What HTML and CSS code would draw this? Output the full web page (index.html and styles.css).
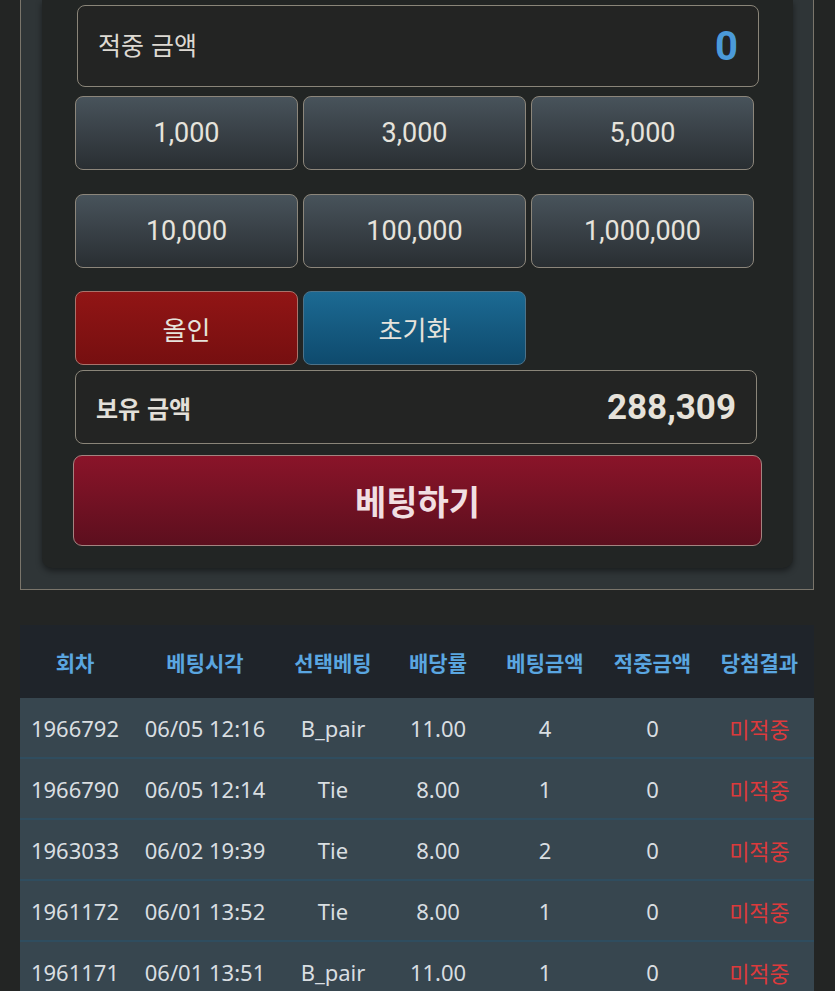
FILE: index.html
```html
<!DOCTYPE html>
<html lang="ko">
<head>
    <meta charset="UTF-8">
    <meta name="viewport" content="width=device-width, initial-scale=1.0">
    <title>베팅</title>
    <link rel="stylesheet" href="styles.css">
</head>
<body>
    <div class="bet-panel">
        <div class="bet-inner">
            <div class="win-box">
                <span class="win-label">적중 금액</span>
                <span class="win-value">0</span>
            </div>
            <div class="chip-grid">
                <button class="chip">1,000</button>
                <button class="chip">3,000</button>
                <button class="chip">5,000</button>
                <button class="chip">10,000</button>
                <button class="chip">100,000</button>
                <button class="chip">1,000,000</button>
            </div>
            <div class="action-row">
                <button class="action all-in">올인</button>
                <button class="action reset">초기화</button>
            </div>
            <div class="balance-box">
                <span class="balance-label">보유 금액</span>
                <span class="balance-value">288,309</span>
            </div>
            <button class="bet-btn">베팅하기</button>
        </div>
    </div>

    <table class="history">
        <colgroup>
            <col style="width:110px">
            <col style="width:150px">
            <col style="width:106px">
            <col style="width:104px">
            <col style="width:110px">
            <col style="width:105px">
            <col>
        </colgroup>
        <thead>
            <tr>
                <th>회차</th>
                <th>베팅시각</th>
                <th>선택베팅</th>
                <th>배당률</th>
                <th>베팅금액</th>
                <th>적중금액</th>
                <th>당첨결과</th>
            </tr>
        </thead>
        <tbody>
            <tr>
                <td>1966792</td><td>06/05 12:16</td><td>B_pair</td><td>11.00</td><td>4</td><td>0</td><td class="miss">미적중</td>
            </tr>
            <tr>
                <td>1966790</td><td>06/05 12:14</td><td>Tie</td><td>8.00</td><td>1</td><td>0</td><td class="miss">미적중</td>
            </tr>
            <tr>
                <td>1963033</td><td>06/02 19:39</td><td>Tie</td><td>8.00</td><td>2</td><td>0</td><td class="miss">미적중</td>
            </tr>
            <tr>
                <td>1961172</td><td>06/01 13:52</td><td>Tie</td><td>8.00</td><td>1</td><td>0</td><td class="miss">미적중</td>
            </tr>
            <tr>
                <td>1961171</td><td>06/01 13:51</td><td>B_pair</td><td>11.00</td><td>1</td><td>0</td><td class="miss">미적중</td>
            </tr>
        </tbody>
    </table>
</body>
</html>
```

FILE: styles.css
```css
body {
    margin: 0;
    background-color: #232524;
    font-family: Roboto, "Noto Sans CJK KR", sans-serif;
    color: #e4e1da;
}
button {
    font-family: Roboto, "Noto Sans CJK KR", sans-serif;
    cursor: pointer;
}
.bet-panel {
    margin-left: 20px;
    width: 751px;
    padding: 0 20px 21px 21px;
    background-color: #2f3537;
    border: 1px solid #7a756b;
    border-top: none;
}
.bet-inner {
    background-color: #222524;
    border-radius: 0 0 10px 10px;
    box-shadow: 0 3px 6px rgba(0, 0, 0, 0.45);
    padding: 5px 31px 22px 31px;
}
.win-box, .balance-box {
    display: flex;
    justify-content: space-between;
    align-items: center;
    border: 1px solid #8a8579;
    border-radius: 8px;
    background-color: #232423;
}
.win-box {
    height: 80px;
    margin: 0 3px 0 4px;
    padding: 0 20px;
}
.win-label {
    font-family: "Noto Sans CJK KR", sans-serif;
    font-size: 25px;
    color: #ddd9d2;
    margin-bottom: 4px;
}
.win-value {
    font-size: 40px;
    font-weight: bold;
    color: #4b9ad9;
}
.chip-grid {
    display: grid;
    grid-template-columns: repeat(3, 223px);
    column-gap: 5px;
    row-gap: 24px;
    margin: 9px 0 0 2px;
}
.chip, .action {
    height: 74px;
    border: 1px solid #8c867b;
    border-radius: 8px;
    font-size: 27px;
    color: #e6e3dc;
}
.chip {
    background: linear-gradient(#48535b, #292e32);
}
.action-row {
    display: grid;
    grid-template-columns: repeat(3, 223px);
    column-gap: 5px;
    margin: 23px 0 0 2px;
}
.action {
    font-family: "Noto Sans CJK KR", sans-serif;
    font-size: 26px;
}
.all-in {
    background: linear-gradient(#911515, #760f10);
    border-color: #a9736b;
}
.reset {
    background: linear-gradient(#1c6a93, #0e4a6d);
    border-color: #4d7288;
}
.balance-box {
    height: 72px;
    margin: 5px 5px 0 2px;
    padding: 0 20px;
}
.balance-label {
    font-family: "Noto Sans CJK KR", sans-serif;
    font-size: 24px;
    font-weight: bold;
    color: #e3e0d9;
}
.balance-value {
    font-size: 35px;
    font-weight: bold;
    color: #e6e2da;
}
.bet-btn {
    display: block;
    width: 100%;
    height: 91px;
    margin-top: 11px;
    border: 1px solid #a48380;
    border-radius: 9px;
    background: linear-gradient(#8a1429, #5c0f1e);
    font-family: "Noto Sans CJK KR", sans-serif;
    font-size: 34px;
    font-weight: bold;
    color: #f1dfe2;
}
.history {
    margin: 35px 0 0 20px;
    width: 794px;
    border-collapse: collapse;
    table-layout: fixed;
    font-family: "Noto Sans", "Noto Sans CJK KR", sans-serif;
}
.history th {
    height: 73px;
    background-color: #1f242a;
    color: #5aa6e0;
    font-family: "Noto Sans CJK KR", sans-serif;
    font-size: 21px;
    font-weight: bold;
    text-align: center;
    padding: 0;
}
.history td {
    height: 59px;
    background-color: #37464f;
    border-bottom: 2px solid #2f4d5f;
    color: #d9dee1;
    font-size: 22px;
    text-align: center;
    padding: 0;
}
.history td.miss {
    color: #dc3a3c;
    font-family: "Noto Sans CJK KR", sans-serif;
}
```
